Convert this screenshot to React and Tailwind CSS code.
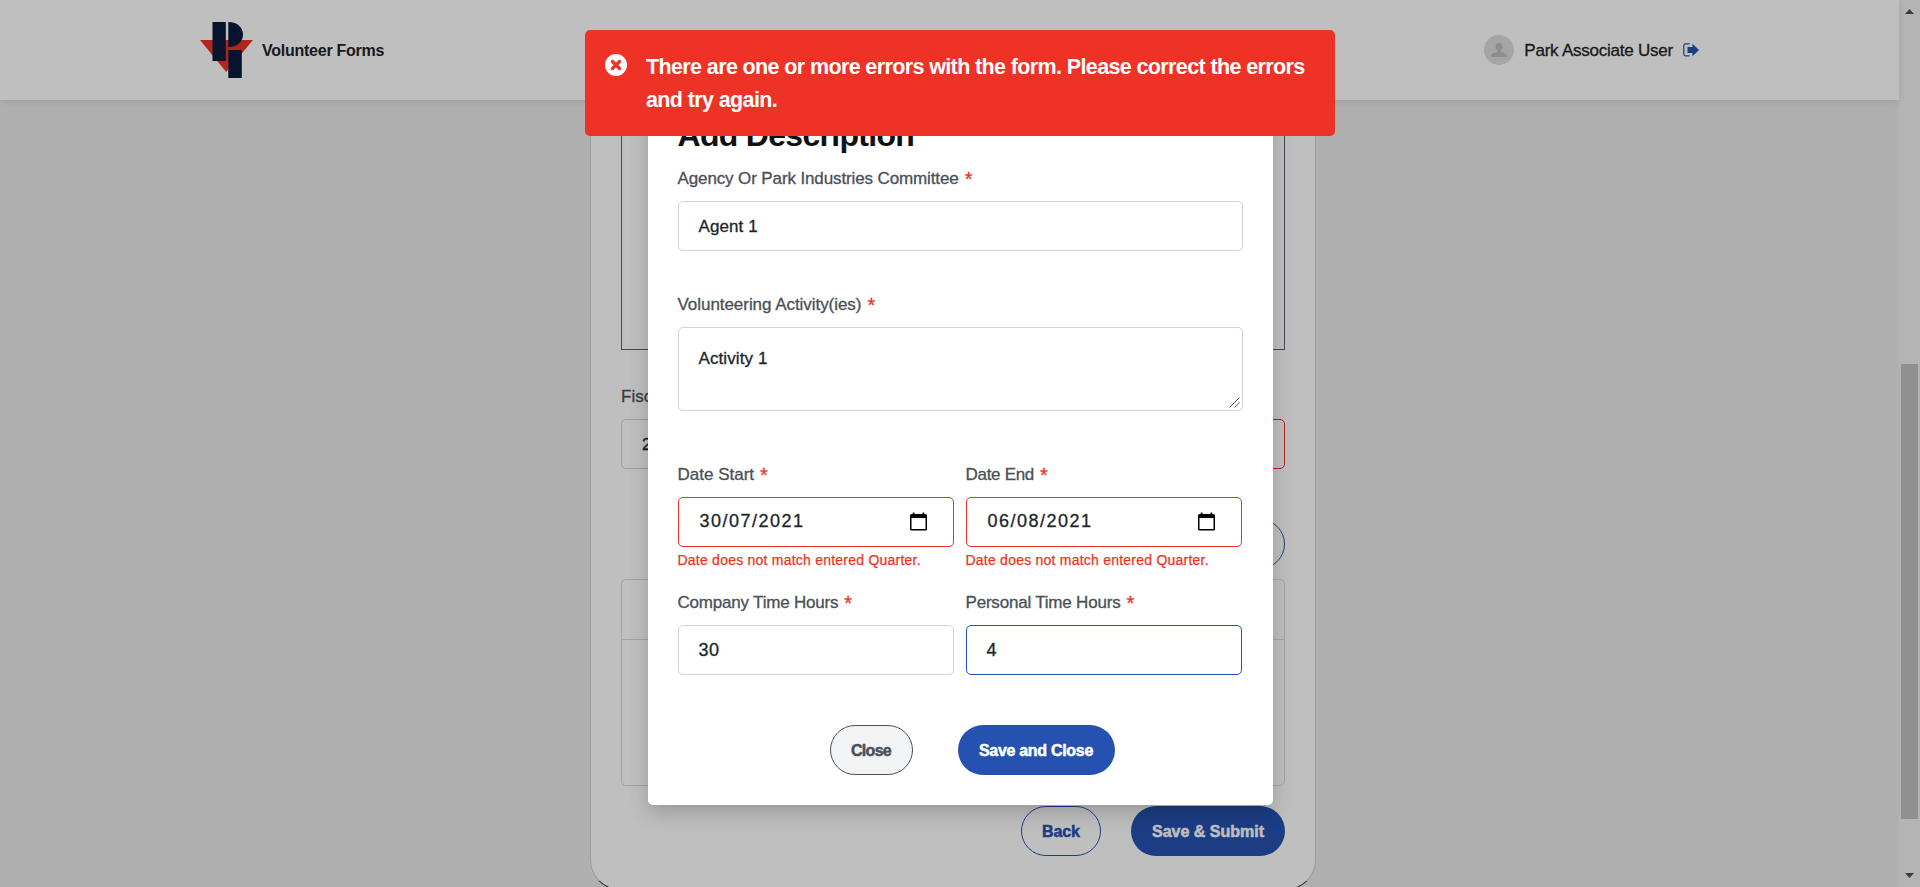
import React from "react";

function Label({ children, className = "", textClass = "" }) {
  return (
    <div className={`flex h-6 items-start whitespace-nowrap text-[17px] leading-6 text-[#495057] [-webkit-text-stroke:0.3px_currentColor] ${className}`}>
      <span className={`pt-px ${textClass}`}>{children}</span>
      <span className="ml-[6px] pt-px text-[20px] leading-6 tracking-normal text-[#ee3326]">*</span>
    </div>
  );
}

function Field({ value, className = "border-[#ced4da]", textClass = "pt-px", icon }) {
  return (
    <div className={`flex h-[50px] items-center justify-between rounded-[5px] border bg-white pl-5 pr-[26px] text-[17px] leading-6 text-[#212529] [-webkit-text-stroke:0.3px_currentColor] ${className}`}>
      <span className={textClass}>{value}</span>
      {icon}
    </div>
  );
}

function CalendarIcon() {
  return (
    <svg className="h-[19px] w-[17px] -translate-y-px" viewBox="0 0 17 19">
      <path fill="#000" d="M2.800 .500h1.700V2h8V.500h1.700V2h1.300A1.500 1.500 0 0 1 17 3.500V17a1.500 1.500 0 0 1-1.500 1.500h-14A1.500 1.500 0 0 1 0 17V3.500A1.500 1.500 0 0 1 1.500 2h1.300zM1.500 6v11h14V6z" />
    </svg>
  );
}

function Logo() {
  return (
    <svg className="h-[56px] w-[53px]" viewBox="0 0 53 56">
      <path fill="#ee3326" d="M0 18h53L26.200 50z" />
      <path fill="#0a1a3f" d="M12.500 0h13.300v39H12.500zM28.300 0C37.500 0 43 5.500 43 12.500S37.500 25 28.300 25zM28.300 28h13.500v28H28.300z" />
    </svg>
  );
}

function Header() {
  return (
    <header className="relative flex h-[100px] shrink-0 items-center justify-between bg-white pl-[200px] pr-[200px] shadow-[0_2px_8px_rgba(0,0,0,0.1)]">
      <div className="flex items-center gap-[9px]">
        <Logo />
        <span className="pt-px text-[16px] font-bold leading-6 tracking-[-0.25px] text-[#212529]">Volunteer Forms</span>
      </div>
      <div className="flex items-center">
        <div className="flex size-[30px] items-center justify-center rounded-full bg-[#dcdcdc]">
          <svg className="h-[14px] w-4" viewBox="0 0 16 14">
            <path fill="#bcbcbc" d="M8 0c2 0 3.300 1.400 3.300 3.500 0 1.600-.6 2.900-1.500 3.700v1.500c0 .5 5.200 1.300 6 3.300V14H.2v-2c.8-2 6-2.800 6-3.300V7.200C5.300 6.400 4.700 5.100 4.700 3.500 4.700 1.400 6 0 8 0z" />
          </svg>
        </div>
        <span className="ml-[10px] pt-px text-[17px] leading-6 tracking-[-0.23px] text-[#212529] [-webkit-text-stroke:0.3px_currentColor]">Park Associate User</span>
        <svg className="ml-[10px] mb-px h-[14px] w-4" viewBox="0 0 16 14">
          <path fill="none" stroke="#2552b0" strokeWidth="1.200" d="M6.500 .9H2.500Q.8 .9 .8 2.600V11Q.8 12.800 2.500 12.800H6.500" />
          <path fill="#2552b0" d="M4.500 4H9.500V.7L16 7 9.500 13.200V10H4.500z" />
        </svg>
      </div>
    </header>
  );
}

function Page() {
  return (
    <div className="flex min-w-0 grow flex-col bg-[#ebebeb]">
      <Header />
      <main className="flex min-h-0 grow justify-center overflow-hidden pl-[7px]">
        <div className="flex h-[790px] w-[726px] shrink-0 flex-col rounded-b-[30px] border-x border-b border-x-[#d0d0d0] border-b-[#444] bg-white px-[30px]">
          <div className="h-[250px] shrink-0 border-x border-b border-[#5c6470]" />
          <div className="mt-[35px] h-6 text-[17px] leading-6 text-[#495057] [-webkit-text-stroke:0.3px_currentColor]">Fiscal Year</div>
          <div className="mt-[10px] grid grid-cols-2 gap-3">
            <div className="flex h-[50px] items-center rounded-[5px] border border-[#ced4da] pl-5 pt-px text-[17px] text-[#212529] [-webkit-text-stroke:0.3px_currentColor]">2021</div>
            <div className="h-[50px] rounded-[5px] border border-[#ee3326]" />
          </div>
          <div className="mt-[50px] flex justify-end">
            <div className="h-[50px] w-[160px] rounded-full border border-[#2552b0]" />
          </div>
          <div className="mt-[10px] h-[207px] shrink-0 rounded-[5px] border border-[#d8dbde]">
            <div className="h-[60px] border-b border-[#d8dbde]" />
          </div>
          <div className="mt-5 flex justify-end gap-[30px] text-[16px] font-bold [-webkit-text-stroke:0.5px_currentColor]">
            <button className="h-[50px] w-20 rounded-full border border-[#2552b0] pt-px tracking-[-0.1px] text-[#2552b0]">Back</button>
            <button className="h-[50px] w-[154px] whitespace-nowrap rounded-full bg-[#2552b0] pt-px text-white">Save &amp; Submit</button>
          </div>
        </div>
      </main>
    </div>
  );
}

function Scrollbar() {
  return (
    <div className="flex w-[21px] shrink-0 flex-col items-center bg-[#f1f1f1]">
      <svg className="mt-[9px] h-[5px] w-[9px]" viewBox="0 0 9 5"><path fill="#505050" d="M4.500 0 9 5H0z" /></svg>
      <div className="mt-[350px] h-[455px] w-[17px] bg-[#c1c1c1]" />
      <svg className="mt-[54px] h-[5px] w-[9px]" viewBox="0 0 9 5"><path fill="#505050" d="M0 0H9L4.500 5z" /></svg>
    </div>
  );
}

function Modal() {
  return (
    <div className="h-[719px] w-[625px] rounded-[5px] bg-white px-[30px] pt-[30px] shadow-[0_8px_20px_rgba(0,0,0,0.2)]">
      <h2 className="h-[38px] text-[32px] font-bold leading-[38px] tracking-[-0.7px] text-[#111]">Add Description</h2>
      <Label className="mt-3" textClass="tracking-[-0.12px]">Agency Or Park Industries Committee</Label>
      <Field value="Agent 1" textClass="pt-px tracking-[0.1px]" className="mt-[11px] border-[#ced4da]" />
      <Label className="mt-[41px]" textClass="tracking-[-0.05px]">Volunteering Activity(ies)</Label>
      <div className="mt-[11px] flex h-[84px] justify-between rounded-[5px] border border-[#ced4da] pl-5 pr-[2px] pt-[19px] text-[17px] leading-6 text-[#212529] [-webkit-text-stroke:0.3px_currentColor]">
        <span className="tracking-[0.1px]">Activity 1</span>
        <svg className="mb-[2px] size-[11px] self-end" viewBox="0 0 11 11"><path stroke="#555" strokeWidth="1" fill="none" d="M.5 10.500 10.500 .5M5.500 10.500 10.500 5.500" /></svg>
      </div>
      <div className="mt-[51px] grid w-[564px] grid-cols-2 gap-x-3">
        <Label>Date Start</Label>
        <Label textClass="tracking-[-0.3px]">Date End</Label>
        <Field value="30/07/2021" textClass="pl-px pb-[2px] text-[18px] tracking-[1.5px]" className="mt-[11px] border-[#ee3326]" icon={<CalendarIcon />} />
        <Field value="06/08/2021" textClass="pl-px pb-[2px] text-[18px] tracking-[1.5px]" className="mt-[11px] border-[#ee3326]" icon={<CalendarIcon />} />
        <p className="mt-1 h-[18px] whitespace-nowrap text-[14px] leading-[18px] tracking-[0.23px] text-[#ee3326] [-webkit-text-stroke:0.25px_currentColor]">Date does not match entered Quarter.</p>
        <p className="mt-1 h-[18px] whitespace-nowrap text-[14px] leading-[18px] tracking-[0.23px] text-[#ee3326] [-webkit-text-stroke:0.25px_currentColor]">Date does not match entered Quarter.</p>
        <Label className="mt-[21px]" textClass="tracking-[-0.2px]">Company Time Hours</Label>
        <Label className="mt-[21px]" textClass="tracking-[-0.2px]">Personal Time Hours</Label>
        <Field value="30" textClass="text-[18px] tracking-[0.5px]" className="mt-[11px] border-[#ced4da]" />
        <Field value="4" textClass="text-[18px]" className="mt-[11px] border-[#2552b0]" />
      </div>
      <div className="mt-[50px] flex gap-[45px] pl-[152px] text-[16px] font-bold [-webkit-text-stroke:0.5px_currentColor]">
        <button className="h-[50px] w-[83px] rounded-full border border-[#495057] bg-[#f1f3f5] pt-px tracking-[-0.7px] text-[#495057]">Close</button>
        <button className="h-[50px] w-[157px] whitespace-nowrap rounded-full bg-[#2552b0] pt-px tracking-[-0.3px] text-white">Save and Close</button>
      </div>
    </div>
  );
}

function Alert() {
  return (
    <div className="flex h-[106px] w-[750px] rounded-[5px] bg-[#ee3326] pl-5 pt-5 text-white">
      <svg className="mt-1 size-[22px] shrink-0" viewBox="0 0 22 22">
        <circle cx="11" cy="11" r="11" fill="#fff" />
        <path stroke="#ee3326" strokeWidth="3.400" strokeLinecap="round" d="M7.500 7.500 14.500 14.500M14.500 7.500 7.500 14.500" />
      </svg>
      <p className="ml-[19px] whitespace-nowrap pt-px text-[21.5px] font-bold leading-[33px] tracking-[-0.62px]">
        There are one or more errors with the form. Please correct the errors<br />and try again.
      </p>
    </div>
  );
}

export default function App() {
  return (
    <div className="relative flex h-[887px] w-[1920px] overflow-hidden font-['Liberation_Sans',Arial,sans-serif]">
      <Page />
      <Scrollbar />
      <div className="absolute inset-0 flex justify-center bg-black/25 pt-[86px]">
        <Modal />
      </div>
      <div className="absolute inset-x-0 top-[30px] flex justify-center">
        <Alert />
      </div>
    </div>
  );
}
